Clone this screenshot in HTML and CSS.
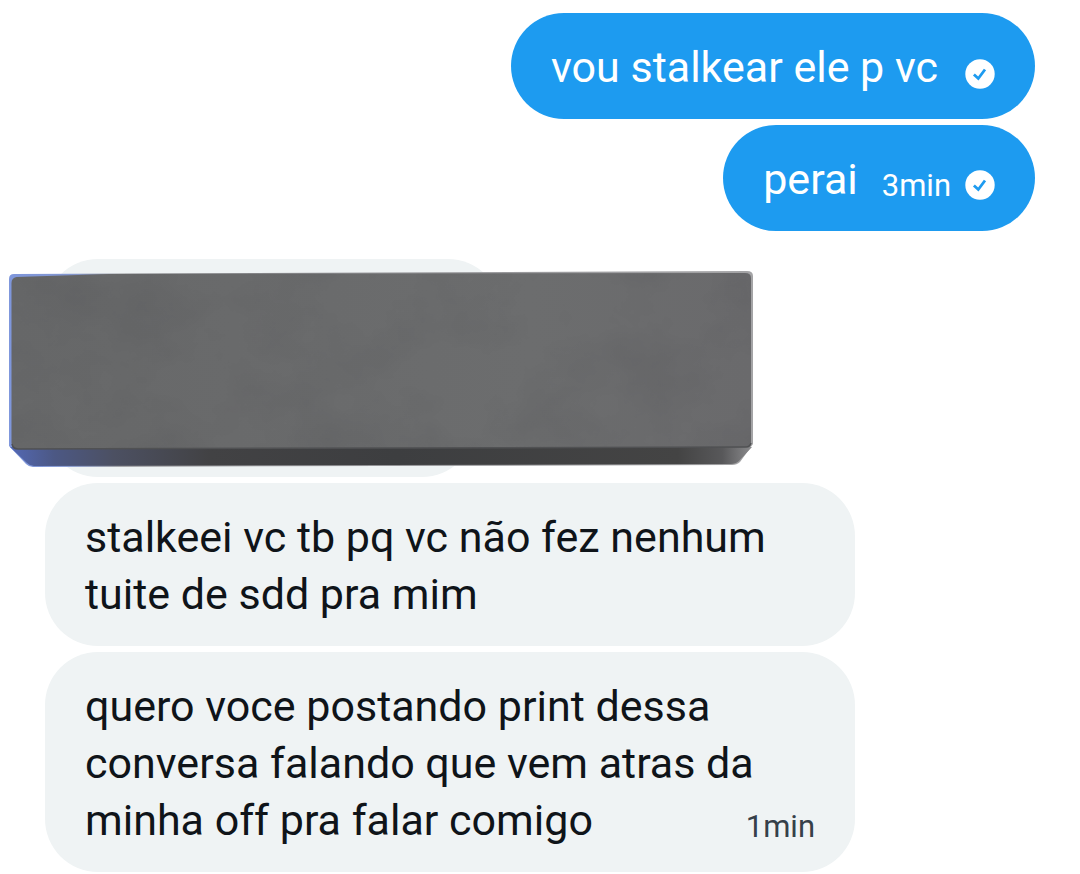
FILE: index.html
```html
<!DOCTYPE html>
<html lang="pt-BR">
<head>
<meta charset="utf-8">
<meta name="viewport" content="width=device-width, initial-scale=1">
<title>Conversa</title>
<link rel="stylesheet" href="styles.css">
</head>
<body>
<main class="chat">
  <section class="group group-sent">
    <article class="bubble sent">
      <p class="text">vou stalkear ele p vc</p>
      <svg class="check" viewBox="0 0 30 30" role="img" aria-label="Enviada"><circle cx="15" cy="15" r="14.7" fill="#fff"/><path d="M8.900 15.400l4.400 4.100 6.700-9" fill="none" stroke="#1d9bf0" stroke-width="2.800"/></svg>
    </article>
    <article class="bubble sent">
      <p class="text">perai</p>
      <time class="time">3min</time>
      <svg class="check" viewBox="0 0 30 30" role="img" aria-label="Enviada"><circle cx="15" cy="15" r="14.7" fill="#fff"/><path d="M8.900 15.400l4.400 4.100 6.700-9" fill="none" stroke="#1d9bf0" stroke-width="2.800"/></svg>
    </article>
  </section>

  <section class="group group-received">
    <div class="covered">
      <article class="bubble received hidden-long"></article>
      <article class="bubble received hidden-short"></article>
      <svg class="bar" viewBox="0 0 746 198" aria-hidden="true">
        <defs>
          <linearGradient id="face" x1="0" y1="0" x2="1" y2="0">
            <stop offset="0" stop-color="#676869"/><stop offset=".3" stop-color="#696a6b"/><stop offset=".7" stop-color="#6c6d6e"/><stop offset="1" stop-color="#6a6a6c"/>
          </linearGradient>
          <linearGradient id="bevel" x1="0" y1="0" x2="1" y2="0">
            <stop offset="0" stop-color="#5368b4"/><stop offset=".06" stop-color="#4c5884"/><stop offset=".14" stop-color="#4c5062"/><stop offset=".27" stop-color="#424244"/><stop offset=".52" stop-color="#3d3e40"/><stop offset=".9" stop-color="#444"/><stop offset=".96" stop-color="#58585a"/><stop offset="1" stop-color="#8b8b8d"/>
          </linearGradient>
          <linearGradient id="rim" x1="0" y1="0" x2="1" y2="0">
            <stop offset="0" stop-color="#7f97dc"/><stop offset=".08" stop-color="#8296d0"/><stop offset=".15" stop-color="#88888c"/><stop offset="1" stop-color="#a4a4a6"/>
          </linearGradient>
          <filter id="grain" x="0" y="0" width="1" height="1" color-interpolation-filters="sRGB">
            <feTurbulence type="fractalNoise" baseFrequency=".012 .014" numOctaves="6" seed="8"/>
            <feColorMatrix values="0 0 0 0 .2  0 0 0 0 .2  0 0 0 0 .22  1.500 0 0 0 -.6"/>
            <feComposite in2="SourceGraphic" operator="in"/>
          </filter>
        </defs>
        <path d="M0 175V8q0-5 5-5L738 0q6 0 6 5V173l-13 18q-3 3-8 3L24 196q-4 0-7-3z" fill="url(#rim)"/>
        <path d="M1 176H743l-13 14q-3 3-8 3L25 195q-4 0-7-3z" fill="url(#bevel)"/>
        <path d="M2.500 172V12q0-5 5-6L100 3 736 2q6 0 6 5V171q0 5-5 5L8 178q-5 0-5.500-6z" fill="url(#face)"/>
        <path d="M2.500 172V12q0-5 5-6L100 3 736 2q6 0 6 5V171q0 5-5 5L8 178q-5 0-5.500-6z" filter="url(#grain)" opacity=".13"/>
        <path d="M3 173q1 5 6 5L737 176q4 0 5-4" fill="none" stroke="#505153" stroke-width="1.500"/>
      </svg>
    </div>
    <article class="bubble received">
      <p class="text">stalkeei vc tb pq vc não fez nenhum tuite de sdd pra mim</p>
    </article>
    <article class="bubble received">
      <p class="text">quero voce postando print dessa conversa falando que vem atras da minha off pra falar comigo <time class="time">1min</time></p>
    </article>
  </section>
</main>
</body>
</html>
```
FILE: styles.css
```css
* {
  box-sizing: border-box;
}

body {
  margin: 0;
  background: #fff;
  color: #0f1419;
  font-family: Roboto, "Noto Sans", sans-serif;
  font-size: 43px;
  line-height: 57px;
}

.chat {
  display: flex;
  flex-direction: column;
  gap: 28px;
  padding: 13px 45px 0;
}

.group,
.covered {
  display: flex;
  flex-direction: column;
  gap: 6px;
}

.group-sent {
  align-items: flex-end;
}

.group-received {
  align-items: flex-start;
}

.bubble {
  min-height: 106px;
  border-radius: 53px;
  padding: 26px 40px 23px;
}

.sent {
  display: flex;
  align-items: flex-end;
  background: #1d9bf0;
  color: #fff;
}

.received {
  width: 75vw;
  background: #eff3f4;
}

.text {
  margin: 0;
}

.time {
  font-size: 31px;
  line-height: 44px;
}

.sent .time {
  margin-left: 24px;
}

.received .time {
  float: right;
  margin-top: 13px;
  color: #364049;
}

.check {
  flex: none;
  width: 30px;
  height: 30px;
  margin: 0 0 7px 27px;
}

.time + .check {
  margin: 0 0 8px 14px;
}

.covered {
  position: relative;
}

.hidden-long {
  width: 456px;
}

.hidden-short {
  width: 430px;
}

.bar {
  position: absolute;
  top: 12px;
  left: -36px;
  width: 746px;
  height: 198px;
}
```
